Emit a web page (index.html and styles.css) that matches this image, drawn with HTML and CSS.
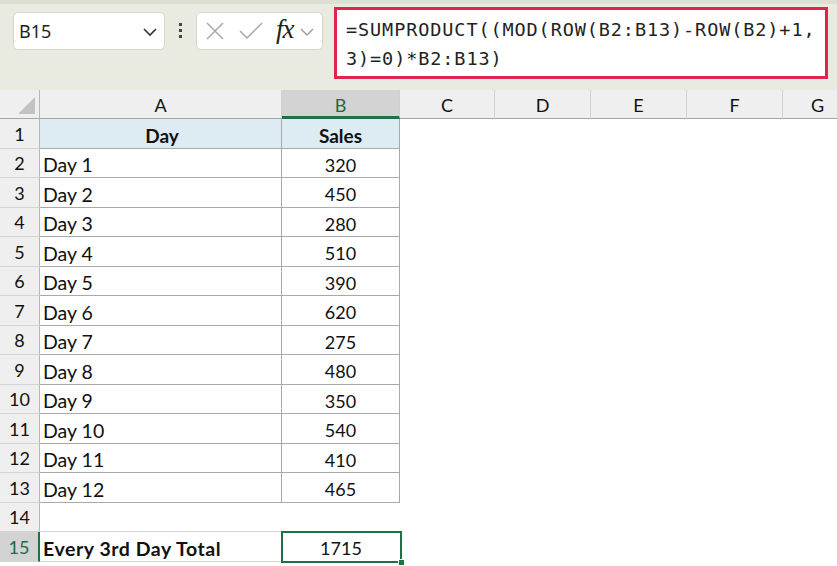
FILE: index.html
```html
<!DOCTYPE html>
<html>
<head>
<meta charset="utf-8">
<link rel="stylesheet" href="styles.css">
</head>
<body>
<div class="app">
  <div class="toolbar">
    <div class="namebox">
      <span class="name">B15</span>
      <svg class="chev" width="16" height="10" viewBox="0 0 16 10"><path d="M2 2 L8 8 L14 2" fill="none" stroke="#333" stroke-width="1.6"/></svg>
    </div>
    <div class="dots"><span></span><span></span><span></span></div>
    <div class="fxbox">
      <svg class="ico" width="20" height="20" viewBox="0 0 20 20"><path d="M2 2 L18 18 M18 2 L2 18" stroke="#a8a8a8" stroke-width="1.5" fill="none"/></svg>
      <svg class="ico chk" width="26" height="20" viewBox="0 0 26 20"><path d="M2 10 L9 17 L24 2" stroke="#a8a8a8" stroke-width="1.5" fill="none"/></svg>
      <span class="fx">fx</span>
      <svg class="ico small" width="14" height="9" viewBox="0 0 14 9"><path d="M1 1 L7 7 L13 1" stroke="#9a9a9a" stroke-width="1.4" fill="none"/></svg>
    </div>
    <div class="formula">=SUMPRODUCT((MOD(ROW(B2:B13)-ROW(B2)+1,<br>3)=0)*B2:B13)</div>
  </div>

  <div class="sheet">
    <div class="hd corner"><span class="tri"></span></div>
    <div class="hd col">A</div>
    <div class="hd col sel">B</div>
    <div class="hd col c">C</div>
    <div class="hd col">D</div>
    <div class="hd col">E</div>
    <div class="hd col">F</div>
    <div class="hd col last">G</div>

    <div class="rh r30">1</div><div class="cell head a r30">Day</div><div class="cell head b r30">Sales</div><div class="blank r30"></div>
    <div class="rh r29">2</div><div class="cell a r29">Day 1</div><div class="cell b r29">320</div><div class="blank r29"></div>
    <div class="rh r30">3</div><div class="cell a r30">Day 2</div><div class="cell b r30">450</div><div class="blank r30"></div>
    <div class="rh r29">4</div><div class="cell a r29">Day 3</div><div class="cell b r29">280</div><div class="blank r29"></div>
    <div class="rh r30">5</div><div class="cell a r30">Day 4</div><div class="cell b r30">510</div><div class="blank r30"></div>
    <div class="rh r29">6</div><div class="cell a r29">Day 5</div><div class="cell b r29">390</div><div class="blank r29"></div>
    <div class="rh r30">7</div><div class="cell a r30">Day 6</div><div class="cell b r30">620</div><div class="blank r30"></div>
    <div class="rh r29">8</div><div class="cell a r29">Day 7</div><div class="cell b r29">275</div><div class="blank r29"></div>
    <div class="rh r30">9</div><div class="cell a r30">Day 8</div><div class="cell b r30">480</div><div class="blank r30"></div>
    <div class="rh r29">10</div><div class="cell a r29">Day 9</div><div class="cell b r29">350</div><div class="blank r29"></div>
    <div class="rh r30">11</div><div class="cell a r30">Day 10</div><div class="cell b r30">540</div><div class="blank r30"></div>
    <div class="rh r29">12</div><div class="cell a r29">Day 11</div><div class="cell b r29">410</div><div class="blank r29"></div>
    <div class="rh r30">13</div><div class="cell a r30">Day 12</div><div class="cell b r30">465</div><div class="blank r30"></div>
    <div class="rh r29">14</div><div class="empty a14 r29"></div><div class="empty r29"></div><div class="blank r29"></div>
    <div class="rh r30 selrow">15</div><div class="cell a15 r30"><b>Every 3rd Day Total</b></div><div class="cell b15 r30">1715<span class="selbox"></span><span class="handle"></span></div><div class="blank r30"></div>
  </div>
</div>
</body>
</html>
```

FILE: styles.css
```css
* { box-sizing: border-box; }
html, body { margin: 0; padding: 0; }
body { width: 837px; height: 566px; overflow: hidden; background: #fff; font-family: Lato, "Open Sans", sans-serif; color: #111; }

.toolbar {
  height: 90px;
  background: #e9ebe1;
  border-top: 4px solid #dcdfd2;
  display: flex;
  align-items: flex-start;
  padding-left: 13px;
}
.namebox {
  margin-top: 8px;
  width: 152px;
  height: 38px;
  background: #fff;
  border: 1px solid #d6d8cf;
  border-radius: 5px;
  display: flex;
  align-items: center;
  justify-content: space-between;
  padding: 0 6px 0 5px;
  font-family: "Noto Sans", "Open Sans", sans-serif;
  font-size: 18px;
  color: #222;
}
.namebox .chev { margin-top: 2px; }
.dots {
  width: 31px;
  margin-top: 19px;
  display: flex;
  flex-direction: column;
  align-items: center;
  gap: 3px;
}
.dots span { width: 3px; height: 3px; background: #444; display: block; }
.fxbox {
  margin-top: 8px;
  width: 127px;
  height: 38px;
  background: #fff;
  border: 1px solid #d6d8cf;
  border-radius: 5px;
  display: flex;
  align-items: center;
  padding-left: 8px;
}
.fxbox .chk { margin-left: 13px; }
.fx {
  font-family: "Liberation Serif", "DejaVu Serif", serif;
  font-style: italic;
  font-size: 27px;
  color: #222;
  margin-left: 12px;
  margin-top: -4px;
  letter-spacing: -1px;
}
.fxbox .small { margin-left: 6px; margin-top: 2px; }
.formula {
  margin-left: 11px;
  margin-top: 3px;
  width: 494px;
  height: 72px;
  background: #fff;
  border: 3px solid #e0244c;
  font-family: "DejaVu Sans Mono", "Liberation Mono", monospace;
  font-size: 18.5px;
  letter-spacing: 0.9px;
  line-height: 29px;
  padding: 5px 0 0 9px;
  color: #222;
  white-space: nowrap;
}

.sheet {
  display: grid;
  grid-template-columns: 40px 242px 118px 95px 96px 96px 96px 54px;
  grid-auto-rows: auto;
  font-size: 18px;
}
.sheet > div { display: flex; align-items: center; }
.hd {
  height: 29px;
  background: #efefef;
  border-bottom: 1px solid #a5a5a5;
  border-right: 1px solid #d0d0d0;
  justify-content: center;
  color: #111;
  padding-top: 1px;
}
.hd.corner { border-right: 1px solid #b8b8b8; position: relative; }
.tri {
  position: absolute;
  right: 4px;
  bottom: 4px;
  width: 0; height: 0;
  border-left: 17px solid transparent;
  border-bottom: 17px solid #c2c2c2;
}
.hd.sel {
  background: #d3d3d3;
  color: #1d6b3f;
  border-bottom: 3px solid #1e7145;
  padding-top: 3px;
}
.hd.last { border-right: none; justify-content: flex-start; padding-left: 28px; }

.r30 { height: 30px; }
.r29 { height: 29px; }
.rh {
  background: #efefef;
  border-right: 1px solid #b8b8b8;
  border-bottom: 1px solid #d4d4d4;
  justify-content: center;
  color: #111;
}
.rh.selrow {
  background: #d3d3d3;
  color: #1d6b3f;
  border-right: 2px solid #1e7145;
}
.blank { grid-column: 4 / 9; }
.cell {
  border-right: 1px solid #a9a9a9;
  border-bottom: 1px solid #a9a9a9;
  padding-top: 3px;
}
.cell.a { padding-left: 3px; font-size: 19.5px; }
.cell.b { justify-content: center; }
.cell.head { background: #ddebf3; font-weight: 700; justify-content: center; font-size: 19px; }
.a14 { border-bottom: 1px solid #d4d4d4; }
.cell.a15 { padding-left: 3px; border-right: 1px solid #d4d4d4; border-bottom: 1px solid #d4d4d4; font-size: 19.5px; letter-spacing: 0.55px; }
.cell.b15 { justify-content: center; position: relative; border: none; padding-top: 2px; }
.selbox {
  position: absolute;
  left: -1px; top: -1px; right: -2px; bottom: -1px;
  border: 2px solid #1e7145;
}
.handle {
  position: absolute;
  right: -5px;
  bottom: -4px;
  width: 7px; height: 7px;
  background: #1e7145;
  border: 1px solid #fff;
}
```
